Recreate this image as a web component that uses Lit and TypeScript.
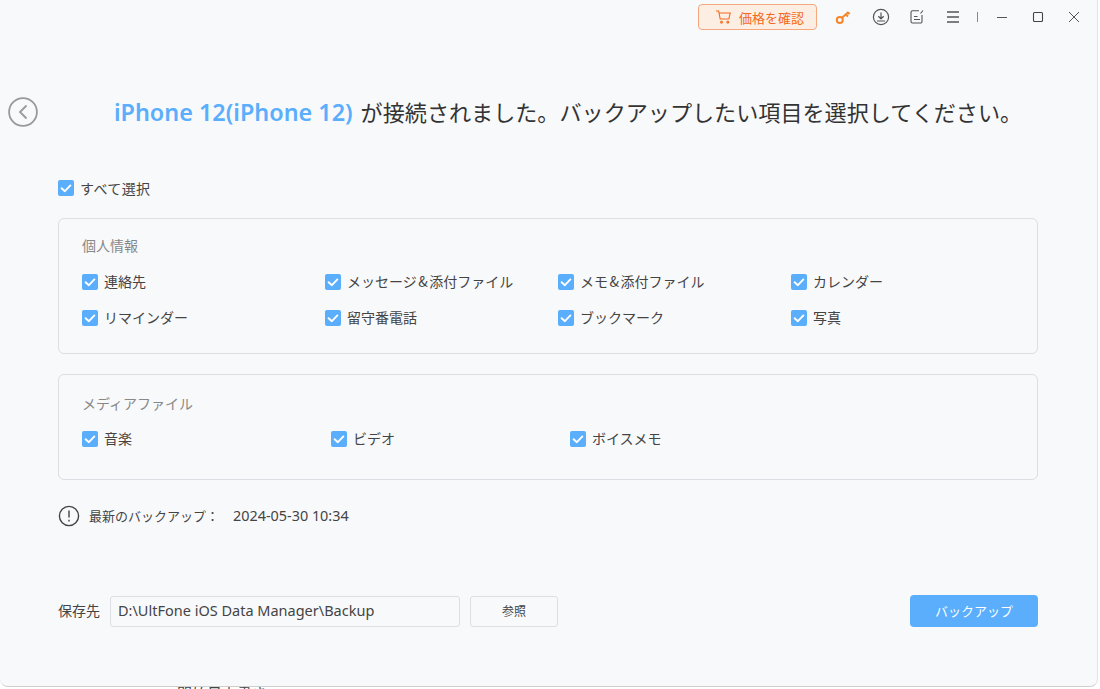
import { LitElement, html, css } from "lit";
import { customElement } from "lit/decorators.js";

const FONT = css`"Noto Sans CJK JP", "Noto Sans", sans-serif`;

const check = html`<span class="box"><svg width="16" height="16" viewBox="0 0 16 16"><path d="M3.6 8.2 6.9 11.2 12.4 5.4" fill="none" stroke="#fff" stroke-width="1.9" stroke-linecap="round" stroke-linejoin="round"/></svg></span>`;

const item = (label: unknown, w: number) =>
  html`<label class="item" style="width:${w}px">${check}<span class="lb">${label}</span></label>`;

const amp = html`<span class="amp">&amp;</span>`;

@customElement("app-root")
export class AppRoot extends LitElement {
  static styles = css`
    :host { display: block; width: 1100px; height: 689px; overflow: hidden; background: #fff; font-family: ${FONT}; color: #444; }
    * { box-sizing: border-box; }
    .window { width: 1098px; height: 687px; background: #f8f9fb; border-right: 1px solid #e2e2e2; border-bottom: 1px solid #cfcfcf; border-radius: 0 0 8px 8px; display: flex; flex-direction: column; position: relative; }
    .titlebar { height: 34px; display: flex; align-items: center; padding-left: 698px; }
    .buy { width: 119px; height: 26px; border: 1px solid #f5a77e; border-radius: 4px; background: #fdeee4; color: #f06b1d; font-size: 13px; display: flex; align-items: center; gap: 6px; padding-left: 16px; white-space: nowrap; }
    .tb { display: flex; align-items: center; justify-content: center; width: 36px; height: 24px; }
    .sep { width: 1px; height: 10px; background: #888; margin-left: 6px; }
    .head { height: 146px; padding-top: 8px; display: flex; align-items: center; position: relative; }
    .back { position: absolute; left: 8px; top: 63px; }
    h1 { margin: 0; width: 100%; text-align: center; font-size: 22.1px; font-weight: 400; color: #333; padding-left: 39px; white-space: nowrap; }
    h1 b { color: #5aaefb; font-weight: 600; font-family: "Noto Sans", sans-serif; font-size: 23.4px; margin-right: 3px; }
    .content { padding: 0 59px 0 58px; }
    .item { display: flex; align-items: center; gap: 6px; font-size: 14px; color: #444; height: 18px; white-space: nowrap; }
    .lb { padding-bottom: 2px; }
    .amp { padding: 0 1.5px; }
    .box { width: 16px; height: 16px; border-radius: 2px; background: #5aaefb; display: block; flex: none; }
    .box svg { display: block; }
    .all { margin-top: -1px; }
    .all .lb { letter-spacing: .4px; padding-bottom: 0; }
    .group { border: 1px solid #dcdfe3; border-radius: 6px; padding: 18px 23px 0; }
    .group.a { height: 136px; margin-top: 21px; }
    .group.b { height: 106px; margin-top: 20px; padding-top: 20px; }
    .gt { font-size: 14px; line-height: 16px; padding-bottom: 2px; color: #888; margin-bottom: 18px; }
    .group.b .gt { margin-bottom: 17px; }
    .row { display: flex; margin-bottom: 18px; }
    .info { display: flex; align-items: center; gap: 9px; margin-top: 25px; font-size: 13px; color: #444; height: 22px; }
    .info .txt { padding-bottom: 2px; }
    .info .date { margin-left: 5px; font-family: "Noto Sans", sans-serif; font-size: 14.4px; padding-bottom: 2px; }
    .foot { display: flex; align-items: center; margin-top: 68px; font-size: 14px; }
    .foot .lb { padding-bottom: 2px; }
    .path { width: 350px; height: 31px; margin-left: 10px; border: 1px solid #dcdfe3; border-radius: 3px; display: flex; align-items: center; padding: 0 0 2px 7px; font-family: "Noto Sans", sans-serif; font-size: 14.5px; color: #444; }
    .browse { width: 88px; height: 31px; margin-left: 10px; border: 1px solid #dcdfe3; border-radius: 3px; display: flex; align-items: center; justify-content: center; font-size: 12px; color: #444; padding-bottom: 2px; }
    .go { width: 128px; height: 32px; margin-left: auto; border-radius: 4px; background: #5aaefb; color: #fff; display: flex; align-items: center; justify-content: center; font-size: 13px; padding-bottom: 1px; }
    .under { padding-left: 177px; font-size: 15px; line-height: 18px; color: #444; white-space: nowrap; margin-top: -3px; }
  `;

  render() {
    return html`
      <div class="window">
        <div class="titlebar">
          <div class="buy">
            <svg width="18" height="16" viewBox="0 0 18 16" fill="none" stroke="#f06b1d" stroke-width="1.1"><path d="M1 2h2.6l1.6 8h8.6l1.4-6H4"/><circle cx="6.5" cy="13.2" r=".9"/><circle cx="12.8" cy="13.2" r=".9"/></svg>
            <span>価格を確認</span>
          </div>
          <div class="tb" style="margin-left:8px">
            <svg width="18" height="18" viewBox="0 0 18 18" fill="none" stroke="#f5862a" stroke-width="2"><circle cx="5.8" cy="12" r="3"/><path d="M8 9.8 14.5 4M11.8 6.5l2.2 2M14 4.6l1.6 1.4"/></svg>
          </div>
          <div class="tb" style="margin-left:2px">
            <svg width="18" height="18" viewBox="0 0 18 18" fill="none" stroke="#555" stroke-width="1.2"><circle cx="9" cy="9" r="7.6"/><path d="M9 4.5v6.3M6.3 8.2 9 10.8l2.7-2.6M5 13h8"/></svg>
          </div>
          <div class="tb">
            <svg width="18" height="18" viewBox="0 0 18 18" fill="none" stroke="#555" stroke-width="1.1"><path d="M11 2.8H4.5a1.5 1.5 0 0 0-1.5 1.5v9.2A1.5 1.5 0 0 0 4.5 15h8a1.5 1.5 0 0 0 1.5-1.5V7M6 8.5h3.5M6 11.5h6M12.5 5.5l2.5-3"/></svg>
          </div>
          <div class="tb">
            <svg width="14" height="14" viewBox="0 0 14 14" fill="none" stroke="#555" stroke-width="1.4"><path d="M1 2h12M1 7h12M1 12h12"/></svg>
          </div>
          <div class="sep"></div>
          <div class="tb" style="margin-left:6px">
            <svg width="12" height="12" viewBox="0 0 12 12" stroke="#555"><path d="M1 6.5h10"/></svg>
          </div>
          <div class="tb">
            <svg width="12" height="12" viewBox="0 0 12 12" fill="none" stroke="#444" stroke-width="1.1"><rect x="1.5" y="1.5" width="9" height="9" rx="1"/></svg>
          </div>
          <div class="tb">
            <svg width="12" height="12" viewBox="0 0 12 12" stroke="#555" stroke-width="1"><path d="M1 1l10 10M11 1 1 11"/></svg>
          </div>
        </div>
        <div class="head">
          <svg class="back" width="30" height="30" viewBox="0 0 30 30" fill="none" stroke="#999" stroke-width="1.8"><circle cx="15" cy="15" r="13.9"/><path d="M18.5 8.5 12 15l6.5 6.5"/></svg>
          <h1><b>iPhone 12(iPhone 12)</b> が接続されました。バックアップしたい項目を選択してください。</h1>
        </div>
        <div class="content">
          <label class="item all">${check}<span class="lb">すべて選択</span></label>
          <div class="group a">
            <div class="gt">個人情報</div>
            <div class="row">${item("連絡先", 243)}${item(html`メッセージ${amp}添付ファイル`, 233)}${item(html`メモ${amp}添付ファイル`, 233)}${item("カレンダー", 100)}</div>
            <div class="row">${item("リマインダー", 243)}${item("留守番電話", 233)}${item("ブックマーク", 233)}${item("写真", 100)}</div>
          </div>
          <div class="group b">
            <div class="gt">メディアファイル</div>
            <div class="row">${item("音楽", 249)}${item("ビデオ", 239)}${item("ボイスメモ", 120)}</div>
          </div>
          <div class="info">
            <svg width="22" height="22" viewBox="0 0 22 22" fill="none" stroke="#444" stroke-width="1.4"><circle cx="11" cy="11" r="9.6"/><path d="M11 5.5v7M11 14.8v1.6"/></svg>
            <span class="txt">最新のバックアップ：</span><span class="date">2024-05-30 10:34</span>
          </div>
          <div class="foot">
            <span class="lb">保存先</span>
            <div class="path">D:\\UltFone iOS Data Manager\\Backup</div>
            <div class="browse">参照</div>
            <div class="go">バックアップ</div>
          </div>
        </div>
      </div>
      <div class="under">開始日上書き</div>
    `;
  }
}
